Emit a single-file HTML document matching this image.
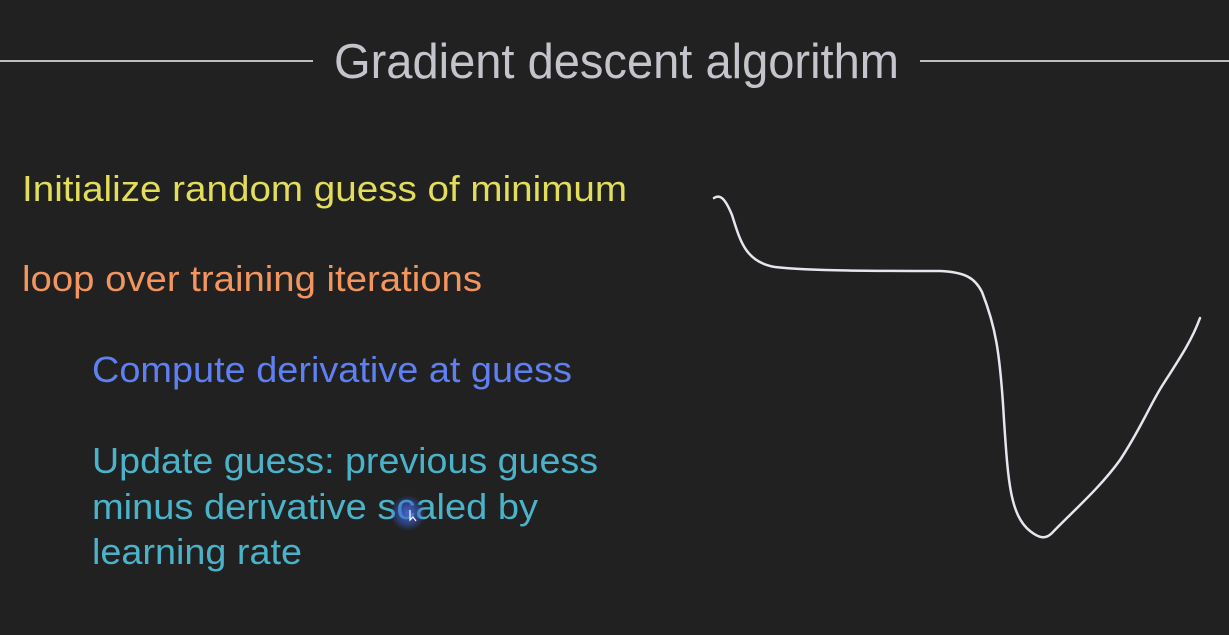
<!DOCTYPE html>
<html><head><style>
html,body{margin:0;padding:0;background:#212121;width:1229px;height:635px;overflow:hidden}
svg{display:block}
text{font-family:"Liberation Sans",sans-serif}
</style></head><body>
<svg width="1229" height="635" viewBox="0 0 1229 635">
<defs><radialGradient id="g"><stop offset="0" stop-color="#4a70e0" stop-opacity="0.9"/><stop offset="0.6" stop-color="#3a5fd0" stop-opacity="0.5"/><stop offset="1" stop-color="#3a5fd0" stop-opacity="0"/></radialGradient></defs>
<rect width="1229" height="635" fill="#212121"/>
<line x1="0" y1="61" x2="313" y2="61" stroke="#bdbdc2" stroke-width="2"/>
<line x1="920" y1="61" x2="1229" y2="61" stroke="#bdbdc2" stroke-width="2"/>
<text x="334" y="78" font-size="49" fill="#c4c4cc" textLength="565" lengthAdjust="spacingAndGlyphs">Gradient descent algorithm</text>
<text x="22" y="201" font-size="36" fill="#e2dd5a" textLength="605" lengthAdjust="spacingAndGlyphs">Initialize random guess of minimum</text>
<text x="22" y="291" font-size="36" fill="#f3955e" textLength="460" lengthAdjust="spacingAndGlyphs">loop over training iterations</text>
<text x="92" y="382" font-size="36" fill="#5e80f2" textLength="480" lengthAdjust="spacingAndGlyphs">Compute derivative at guess</text>
<text x="92" y="473" font-size="36" fill="#4bb3c9" textLength="506" lengthAdjust="spacingAndGlyphs">Update guess: previous guess</text>
<text x="92" y="519" font-size="36" fill="#4bb3c9" textLength="446" lengthAdjust="spacingAndGlyphs">minus derivative scaled by</text>
<text x="92" y="564" font-size="36" fill="#4bb3c9" textLength="210" lengthAdjust="spacingAndGlyphs">learning rate</text>
<circle cx="408" cy="513" r="18" fill="url(#g)"/>
<path d="M410 510 L410 520 L413 517 L416 521" stroke="#fff" stroke-width="1.2" fill="none"/>
<path d="M714 198 C720 194 725 198 732 215 C740 240 745 262 775 267 C810 271 880 271 940 271 C965 272 975 278 982 292 C995 325 1000 350 1004 420 C1008 480 1010 515 1030 531 C1040 539 1046 539 1052 533 C1070 514 1100 488 1120 460 C1140 430 1150 405 1162 386 C1180 358 1192 340 1200 318" stroke="#e6e6ee" stroke-width="2.5" fill="none" stroke-linecap="round"/>
</svg>
</body></html>
